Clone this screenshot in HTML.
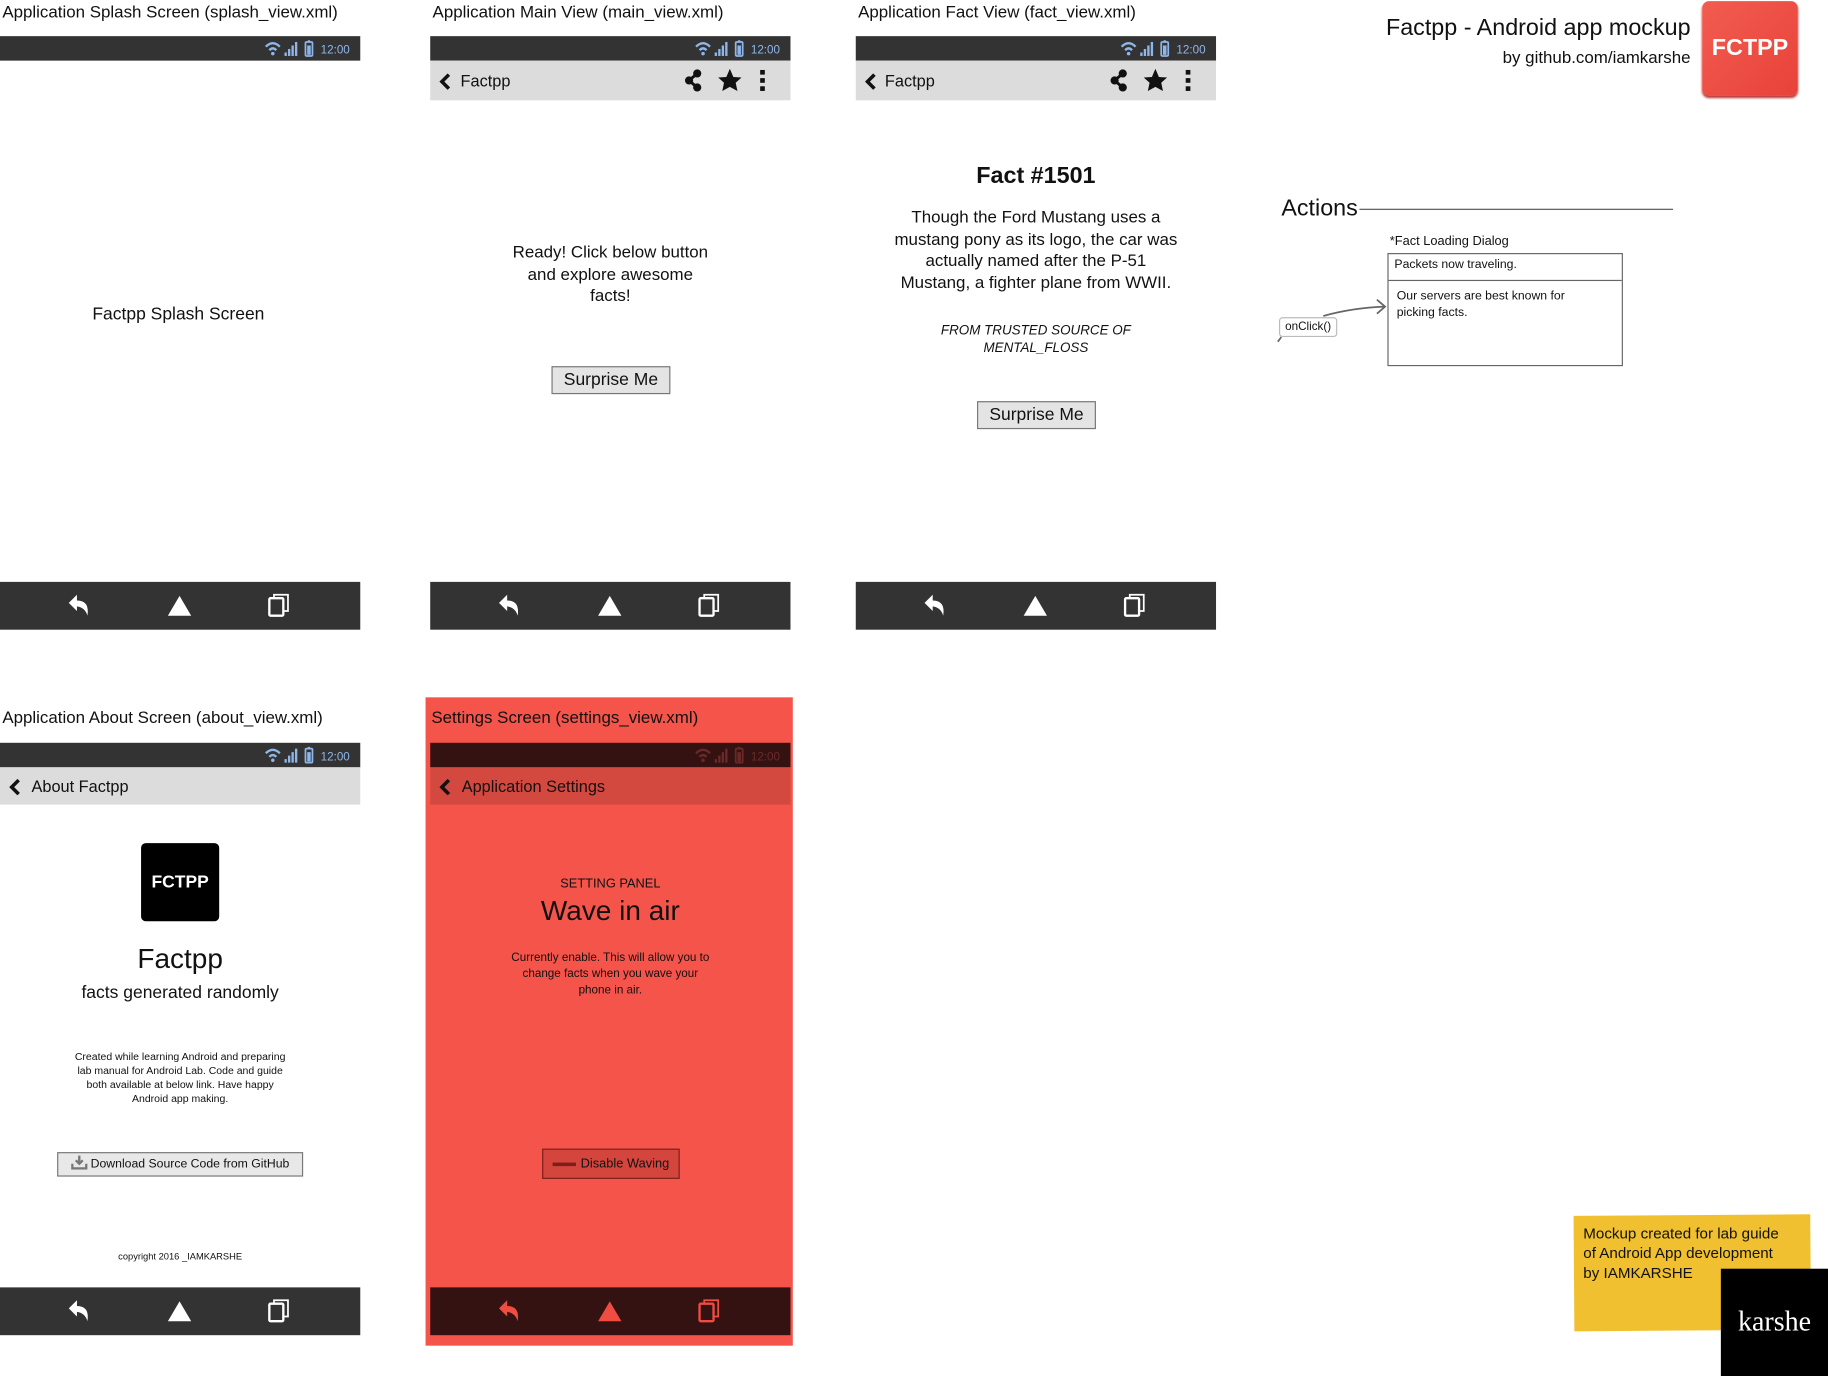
<!DOCTYPE html>
<html><head><meta charset="utf-8"><style>
*{margin:0;padding:0;box-sizing:border-box}
html,body{width:1828px;height:1376px;overflow:hidden;background:#fff}
#w{position:absolute;left:0;top:0;width:1568px;height:1180px;transform:scale(1.1659,1.1661);transform-origin:0 0;font-family:"Liberation Sans",sans-serif;color:#111}
.a{position:absolute}
.t{position:absolute;font-size:14.5px;white-space:nowrap}
.sb{position:absolute;height:21px;width:309px;background:#333}
.ab{position:absolute;height:34px;width:309px;background:#dcdcdc;font-size:14px}
.nb{position:absolute;height:41px;width:309px;background:#333}
.c{position:absolute;text-align:center;white-space:nowrap}
.btn{position:absolute;background:#e4e4e4;border:1px solid #777;font-size:15px;text-align:center}
.chev{position:absolute;left:8px;width:10px;height:14px}
</style></head><body><div id="w">

<svg width="0" height="0" style="position:absolute">
<defs>
<g id="st">
<path d="M2 7 Q8 1 14 7" stroke="currentColor" stroke-width="2" fill="none"/>
<path d="M5 10 Q8 7 11 10" stroke="currentColor" stroke-width="2" fill="none"/>
<circle cx="8" cy="13" r="1.5" fill="currentColor"/>
<rect x="18" y="12" width="2" height="3" fill="currentColor"/><rect x="21" y="9" width="2" height="6" fill="currentColor"/><rect x="24" y="6" width="2" height="9" fill="currentColor"/><rect x="27" y="3" width="2" height="12" fill="currentColor"/>
<rect x="36" y="3" width="6" height="12" rx="1" fill="none" stroke="currentColor" stroke-width="1.5"/><rect x="37.5" y="6" width="3" height="8" fill="currentColor"/><rect x="38" y="1.5" width="2" height="2" fill="currentColor"/>
<text x="49" y="13" font-size="10" fill="currentColor" font-family="Liberation Sans">12:00</text>
</g>
<g id="nv">
<path d="M59 18 L66 11 L66 16 Q77 16 75 29 Q73 22 66 21 L66 25 Z" fill="currentColor"/>
<path d="M154 12 L164 29 L144 29 Z" fill="currentColor"/>
<rect x="231" y="14" width="12" height="15" rx="1" fill="none" stroke="currentColor" stroke-width="2"/>
<path d="M235 14 V11 H247 V25 H243" fill="none" stroke="currentColor" stroke-width="1.5"/>
</g>
<g id="ac">
<circle cx="6" cy="10" r="3.5" fill="#111"/><circle cx="13" cy="4" r="3.5" fill="#111"/><circle cx="13" cy="16" r="3.5" fill="#111"/>
<path d="M6 10 L13 4 M6 10 L13 16" stroke="#111" stroke-width="2.5"/>
<path d="M41 0 L44 7 L51 7.5 L46 12 L47.5 19 L41 15.5 L34.5 19 L36 12 L31 7.5 L38 7 Z" fill="#111"/>
<rect x="67" y="1" width="4" height="4" fill="#111"/><rect x="67" y="8" width="4" height="4" fill="#111"/><rect x="67" y="15" width="4" height="4" fill="#111"/>
</g>
<path id="ch" d="M8 1 L2 7 L8 13" stroke="#111" stroke-width="3" fill="none"/>
</defs></svg>

<!-- Phone 1 -->
<div class="t" style="left:2px;top:3px">Application Splash Screen (splash_view.xml)</div>
<div class="sb" style="left:0;top:31px"><svg class="a" style="left:226px;top:2px;color:#8fb6ea" width="80" height="18"><use href="#st"/></svg></div>
<div class="c" style="left:0;width:306px;top:261px;font-size:15px">Factpp Splash Screen</div>
<div class="nb" style="left:0;top:499px"><svg class="a" style="left:0;top:0;color:#fff" width="309" height="41"><use href="#nv"/></svg></div>

<!-- Phone 2 -->
<div class="t" style="left:371px;top:3px">Application Main View (main_view.xml)</div>
<div class="sb" style="left:369px;top:31px"><svg class="a" style="left:226px;top:2px;color:#8fb6ea" width="80" height="18"><use href="#st"/></svg></div>
<div class="ab" style="left:369px;top:52px"><svg class="chev" style="top:11px"><use href="#ch"/></svg><span class="a" style="left:26px;top:9px">Factpp</span><svg class="a" style="left:216px;top:7px" width="80" height="20"><use href="#ac"/></svg></div>
<div class="c" style="left:369px;width:309px;top:208px;font-size:14.5px;line-height:18.5px">Ready! Click below button<br>and explore awesome<br>facts!</div>
<div class="btn" style="left:473px;top:314px;width:102px;height:24px;line-height:22px">Surprise Me</div>
<div class="nb" style="left:369px;top:499px"><svg class="a" style="left:0;top:0;color:#fff" width="309" height="41"><use href="#nv"/></svg></div>

<!-- Phone 3 -->
<div class="t" style="left:736px;top:3px">Application Fact View (fact_view.xml)</div>
<div class="sb" style="left:734px;top:31px"><svg class="a" style="left:226px;top:2px;color:#8fb6ea" width="80" height="18"><use href="#st"/></svg></div>
<div class="ab" style="left:734px;top:52px"><svg class="chev" style="top:11px"><use href="#ch"/></svg><span class="a" style="left:25px;top:9px">Factpp</span><svg class="a" style="left:216px;top:7px" width="80" height="20"><use href="#ac"/></svg></div>
<div class="c" style="left:734px;width:309px;top:140px;font-size:20px;font-weight:bold">Fact #1501</div>
<div class="c" style="left:734px;width:309px;top:178px;font-size:14.5px;line-height:18.7px">Though the Ford Mustang uses a<br>mustang pony as its logo, the car was<br>actually named after the P-51<br>Mustang, a fighter plane from WWII.</div>
<div class="c" style="left:734px;width:309px;top:277px;font-size:11.5px;line-height:15px;font-style:italic">FROM TRUSTED SOURCE OF<br>MENTAL_FLOSS</div>
<div class="btn" style="left:838px;top:344px;width:102px;height:24px;line-height:22px">Surprise Me</div>
<div class="nb" style="left:734px;top:499px"><svg class="a" style="left:0;top:0;color:#fff" width="309" height="41"><use href="#nv"/></svg></div>

<!-- Header right -->
<div class="a" style="right:118px;top:13px;font-size:20px;white-space:nowrap;text-align:right">Factpp - Android app mockup</div>
<div class="a" style="right:118px;top:42px;font-size:14.5px;white-space:nowrap;text-align:right">by github.com/iamkarshe</div>
<div class="a" style="left:1460px;top:1px;width:82px;height:81px;border-radius:6px;background:linear-gradient(135deg,#f25c50,#e8423a);box-shadow:0 2px 2px #b33;color:#fff;font-weight:bold;font-size:20px;text-align:center;line-height:80px">FCTPP</div>

<!-- Actions -->
<div class="a" style="left:1099px;top:168px;font-size:20px">Actions</div>
<div class="a" style="left:1166px;top:179px;width:269px;height:1px;background:#555"></div>
<div class="a" style="left:1192px;top:201px;font-size:11px">*Fact Loading Dialog</div>
<div class="a" style="left:1190px;top:217px;width:202px;height:97px;border:1px solid #666">
<div class="a" style="left:0;top:22px;width:200px;height:1px;background:#666"></div>
<div class="a" style="left:5px;top:3px;font-size:10.5px">Packets now traveling.</div>
<div class="a" style="left:7px;top:29px;font-size:10.5px;line-height:14px">Our servers are best known for<br>picking facts.</div>
</div>
<svg class="a" style="left:1090px;top:255px" width="105" height="40"><path d="M45 16 Q70 9 98 8" stroke="#666" stroke-width="1.5" fill="none"/><path d="M91 2 L98 8 L91 14" stroke="#666" stroke-width="1.5" fill="none"/><path d="M6 38 L9 34" stroke="#666" stroke-width="1.5"/></svg>
<div class="a" style="left:1097px;top:272px;width:50px;height:17px;border:1px solid #bbb;border-radius:3px;background:#fff;font-size:10px;text-align:center;line-height:15px">onClick()</div>

<!-- Phone 4 -->
<div class="t" style="left:2px;top:608px">Application About Screen (about_view.xml)</div>
<div class="sb" style="left:0;top:637px"><svg class="a" style="left:226px;top:2px;color:#8fb6ea" width="80" height="18"><use href="#st"/></svg></div>
<div class="ab" style="left:0;top:658px;height:32px"><svg class="chev" style="top:10px"><use href="#ch"/></svg><span class="a" style="left:27px;top:8px">About Factpp</span></div>
<div class="a" style="left:121px;top:723px;width:67px;height:67px;border-radius:4px;background:#000;color:#fff;font-weight:bold;font-size:15px;text-align:center;line-height:67px">FCTPP</div>
<div class="c" style="left:0;width:309px;top:809px;font-size:24px">Factpp</div>
<div class="c" style="left:0;width:309px;top:843px;font-size:15px">facts generated randomly</div>
<div class="c" style="left:0;width:309px;top:900px;font-size:9px;line-height:12px">Created while learning Android and preparing<br>lab manual for Android Lab. Code and guide<br>both available at below link. Have happy<br>Android app making.</div>
<div class="btn" style="left:49px;top:988px;width:211px;height:21px;line-height:19px;font-size:10.5px;background:#e8e8e8"><svg width="14" height="13" style="vertical-align:-2px"><path d="M7 1 V8 M4 5 L7 8 L10 5 M1 8 V12 H13 V8" stroke="#777" stroke-width="2" fill="none"/></svg> Download Source Code from GitHub</div>
<div class="c" style="left:0;width:309px;top:1073px;font-size:8px">copyright 2016 _IAMKARSHE</div>
<div class="nb" style="left:0;top:1104px"><svg class="a" style="left:0;top:0;color:#fff" width="309" height="41"><use href="#nv"/></svg></div>

<!-- Phone 5 settings -->
<div class="a" style="left:365px;top:598px;width:315px;height:556px;background:#f4544a"></div>
<div class="t" style="left:370px;top:608px">Settings Screen (settings_view.xml)</div>
<div class="sb" style="left:369px;top:637px;background:#341212"><svg class="a" style="left:226px;top:2px;color:#6b2a28" width="80" height="18"><use href="#st"/></svg></div>
<div class="ab" style="left:369px;top:658px;height:32px;background:#d4493f"><svg class="chev" style="top:10px"><use href="#ch"/></svg><span class="a" style="left:27px;top:8px">Application Settings</span></div>
<div class="c" style="left:369px;width:309px;top:752px;font-size:11px">SETTING PANEL</div>
<div class="c" style="left:369px;width:309px;top:768px;font-size:24px">Wave in air</div>
<div class="c" style="left:369px;width:309px;top:815px;font-size:10px;line-height:14px">Currently enable. This will allow you to<br>change facts when you wave your<br>phone in air.</div>
<div class="a" style="left:465px;top:985px;width:118px;height:26px;background:#d3453d;border:1px solid #7a1f1b;font-size:11px;line-height:24px;white-space:nowrap"><span class="a" style="left:8px;top:11px;width:20px;height:3px;background:#7a1f1b"></span><span class="a" style="left:32px;top:0">Disable Waving</span></div>
<div class="nb" style="left:369px;top:1104px;background:#341212"><svg class="a" style="left:0;top:0;color:#f04c42" width="309" height="41"><use href="#nv"/></svg></div>

<!-- note -->
<div class="a" style="left:1350px;top:1042px;width:203px;height:99px;background:#f0c030;transform:rotate(-0.4deg)"></div>
<div class="a" style="left:1358px;top:1049px;font-size:13px;line-height:17px;white-space:nowrap">Mockup created for lab guide<br>of Android App development<br>by IAMKARSHE</div>
<div class="a" style="left:1476px;top:1088px;width:92px;height:92px;background:#000;color:#fff;font-family:'Liberation Serif',serif;font-size:24px;line-height:92px;text-align:center">karshe</div>

</div></body></html>
